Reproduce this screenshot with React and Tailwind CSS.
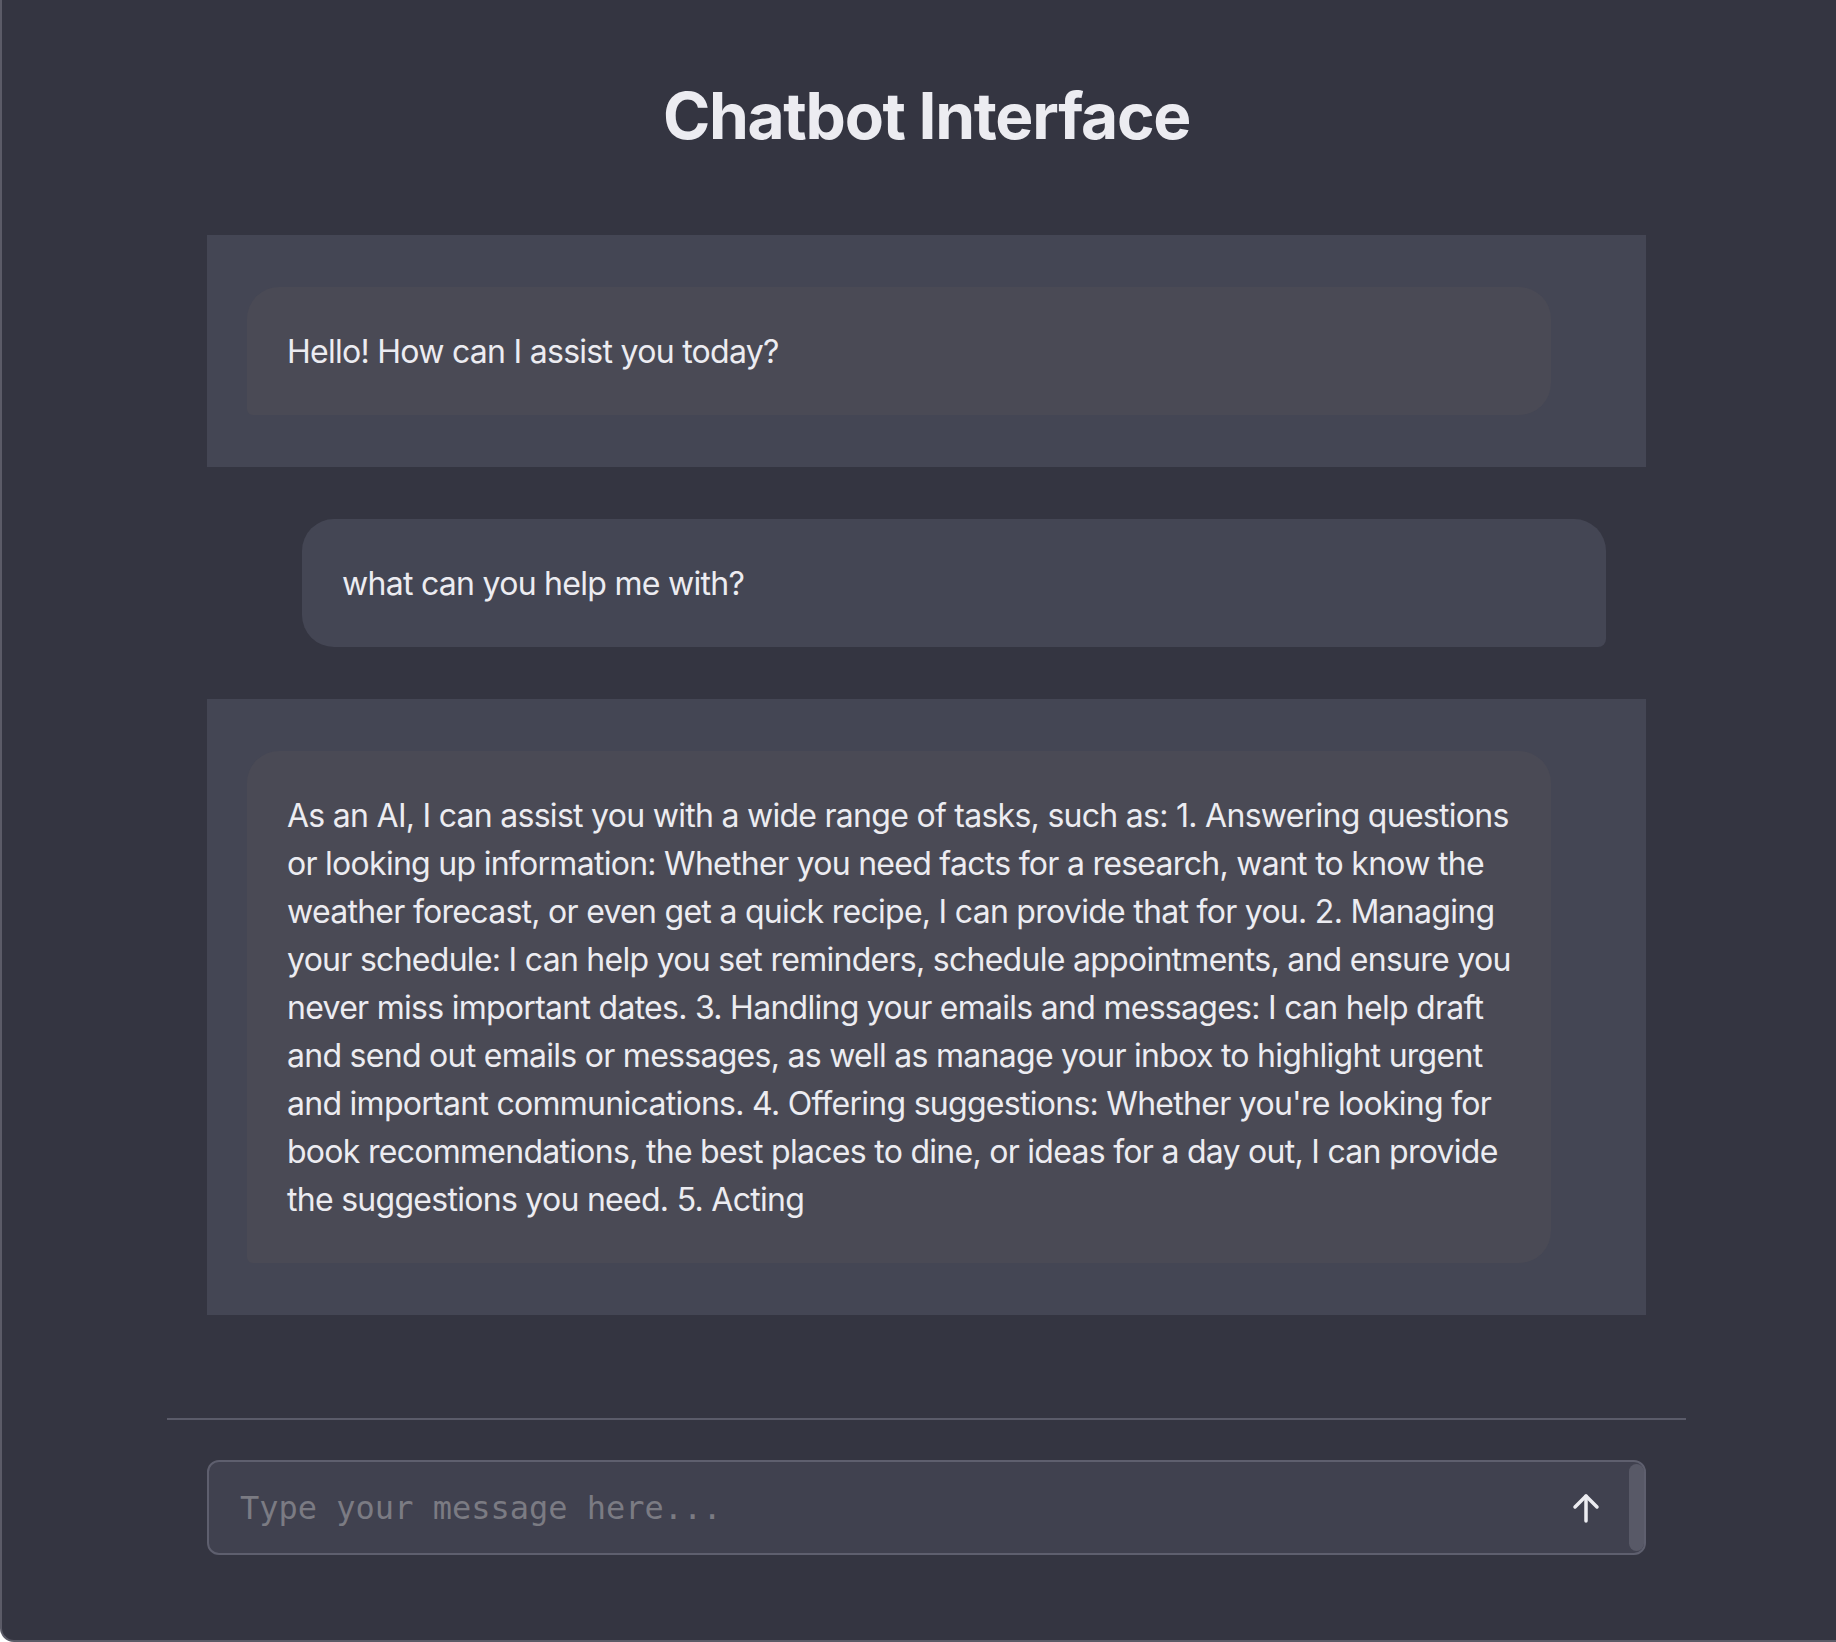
import { useState } from "react";

// Conversation shown in the window. Bot answer is kept as its wrapped lines.
const messages = [
  { role: "bot", lines: ["Hello! How can I assist you today?"] },
  { role: "user", lines: ["what can you help me with?"] },
  {
    role: "bot",
    lines: [
      "As an AI, I can assist you with a wide range of tasks, such as: 1. Answering questions",
      "or looking up information: Whether you need facts for a research, want to know the",
      "weather forecast, or even get a quick recipe, I can provide that for you. 2. Managing",
      "your schedule: I can help you set reminders, schedule appointments, and ensure you",
      "never miss important dates. 3. Handling your emails and messages: I can help draft",
      "and send out emails or messages, as well as manage your inbox to highlight urgent",
      "and important communications. 4. Offering suggestions: Whether you're looking for",
      "book recommendations, the best places to dine, or ideas for a day out, I can provide",
      "the suggestions you need. 5. Acting",
    ],
  },
];

const MessageRow = ({ message }) => {
  const isBot = message.role === "bot";

  return (
    <div className={`flex py-[52px] px-[40px] ${isBot ? "bg-[#444654] justify-start" : "justify-end"}`}>
      <div
        className={`w-[1304px] px-[40px] pt-[41px] pb-[39px] text-[32px] leading-[48px] tracking-[-0.72px] text-[#ececf1] ${
          isBot
            ? "bg-[#4a4a55] rounded-tl-[32px] rounded-tr-[32px] rounded-br-[32px] rounded-bl-[6px]"
            : "bg-[#444654] rounded-tl-[32px] rounded-bl-[32px] rounded-tr-[32px] rounded-br-[8px]"
        }`}
      >
        {message.lines.map((line, i) => (
          <div key={i} className="whitespace-nowrap">
            {line}
          </div>
        ))}
      </div>
    </div>
  );
};

const SendArrow = () => (
  <svg width="28" height="32" viewBox="0 0 28 32" fill="none" stroke="#ececf1" strokeWidth="3.5" strokeLinecap="round" strokeLinejoin="round">
    <path d="M14 4 L14 29" />
    <path d="M3 15 L14 4 L25 15" />
  </svg>
);

export default function App() {
  const [text, setText] = useState("");

  return (
    <div className="h-[1642px] w-full overflow-hidden bg-[#343541] border-l-2 border-b-2 border-[#5b5b67] rounded-bl-[14px] font-['Inter','Noto_Sans',sans-serif]">
      <div className="ml-[165px] w-[1519px] pt-[78px]">
        <h1 className="text-center text-[64px] leading-[1.2] font-bold tracking-[-1.3px] text-[#ececf1] mb-[80px]">
          Chatbot Interface
        </h1>

        {/* Message list */}
        <div className="mx-[40px] flex flex-col">
          {messages.map((m, i) => (
            <MessageRow key={i} message={m} />
          ))}
        </div>

        {/* Composer */}
        <div className="mt-[103px] border-t-2 border-[#5a5b69] pt-[40px] px-[40px]">
          <div className="flex h-[95px] items-center rounded-[12px] border-2 border-[#5e5f6e] bg-[#40414f] pl-[31px] pt-[2px]">
            <textarea
              rows={1}
              value={text}
              onChange={(e) => setText(e.target.value)}
              placeholder="Type your message here..."
              className="h-[48px] flex-1 resize-none overflow-hidden bg-transparent font-['DejaVu_Sans_Mono',monospace] text-[32px] leading-[48px] text-[#ececf1] outline-none placeholder:text-[#7b7b83]"
            />
            <button className="ml-4 flex items-center justify-center">
              <SendArrow />
            </button>
            <div className="ml-[29px] h-[87px] w-[15px] self-start rounded-full bg-[#585967]" />
          </div>
        </div>
      </div>
    </div>
  );
}
